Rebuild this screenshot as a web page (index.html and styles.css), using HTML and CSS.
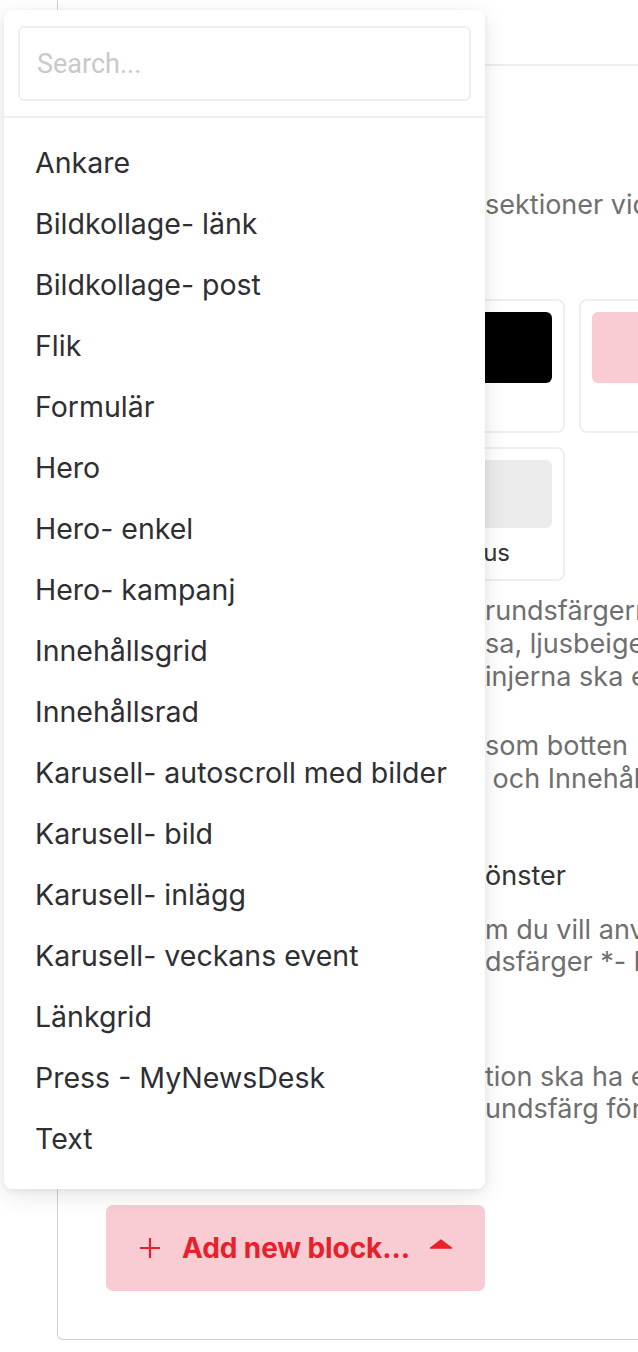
FILE: index.html
```html
<!DOCTYPE html>
<html lang="sv">
<head>
<meta charset="utf-8">
<title>Add new block</title>
<link rel="stylesheet" href="styles.css">
</head>
<body>
<div class="page">
  <section class="card">
    <div class="card-head"></div>
    <div class="card-body">
      <p class="desc intro">sektioner vid behov</p>
      <div class="swatches">
        <div class="swatch-card"><div class="swatch white"></div><span class="swatch-label"></span></div>
        <div class="swatch-card"><div class="swatch beige"></div><span class="swatch-label"></span></div>
        <div class="swatch-card"><div class="swatch black"></div><span class="swatch-label"></span></div>
        <div class="swatch-card"><div class="swatch pink"></div><span class="swatch-label"></span></div>
        <div class="swatch-card"><div class="swatch grey"></div><span class="swatch-label"></span></div>
        <div class="swatch-card"><div class="swatch grey"></div><span class="swatch-label"></span></div>
        <div class="swatch-card"><div class="swatch grey"></div><span class="swatch-label">Plus</span></div>
      </div>
      <div class="desc para-a">
        <p>rundsfärgerna</p>
        <p>sa, ljusbeige</p>
        <p>injerna ska endast</p>
      </div>
      <div class="desc para-b">
        <p>som botten</p>
        <p>&nbsp;och Innehållsrad</p>
      </div>
      <h3 class="sub">önster</h3>
      <div class="desc para-c">
        <p>m du vill använda</p>
        <p>dsfärger *- ljus</p>
      </div>
      <div class="desc para-d">
        <p>tion ska ha en</p>
        <p>undsfärg för</p>
      </div>
      <button class="add-btn" type="button">
        <svg class="plus" viewBox="0 0 22 22" width="22" height="22" aria-hidden="true"><path d="M11 1v20M1 11h20" stroke="currentColor" stroke-width="2.2" fill="none"/></svg>
        <span class="add-label">Add new block...</span>
        <svg class="caret" viewBox="0 0 24 10" width="24" height="10" aria-hidden="true"><path d="M12 1.2 L22.5 9 H1.5 Z" fill="currentColor" stroke="currentColor" stroke-width="1.5" stroke-linejoin="round"/></svg>
      </button>
    </div>
  </section>

  <div class="dropdown">
    <div class="search-wrap">
      <input class="search" type="text" placeholder="Search...">
    </div>
    <ul class="options">
      <li>Ankare</li>
      <li>Bildkollage- länk</li>
      <li>Bildkollage- post</li>
      <li>Flik</li>
      <li>Formulär</li>
      <li>Hero</li>
      <li>Hero- enkel</li>
      <li>Hero- kampanj</li>
      <li>Innehållsgrid</li>
      <li>Innehållsrad</li>
      <li>Karusell- autoscroll med bilder</li>
      <li>Karusell- bild</li>
      <li>Karusell- inlägg</li>
      <li>Karusell- veckans event</li>
      <li>Länkgrid</li>
      <li>Press - MyNewsDesk</li>
      <li>Text</li>
    </ul>
  </div>
</div>
</body>
</html>
```

FILE: styles.css
```css
* { box-sizing: border-box; }
html, body {
  margin: 0;
  padding: 0;
  background: #fff;
  overflow: hidden;
}
body {
  font-family: Inter, "Noto Sans", sans-serif;
  color: #333;
}
.page {
  position: relative;
  width: 638px;
  height: 1352px;
  padding-left: 57px;
  overflow: hidden;
}
.card {
  width: 720px;
  border: 1px solid #cfcfcf;
  border-top: none;
  border-radius: 0 0 6px 6px;
  background: #fff;
}
.card-head {
  height: 66px;
  border-bottom: 2px solid #eeeeee;
}
.card-body {
  padding: 0 0 48px 48px;
  display: grid;
  grid-template-columns: 379px 1fr;
}
.card-body > * { grid-column: 2; }
.card-body > .swatches,
.card-body > .add-btn { grid-column: 1 / -1; }

.desc {
  margin: 0;
  font-size: 27px;
  line-height: 33px;
  color: #6f6f6f;
  white-space: nowrap;
}
.desc p { margin: 0; }
.intro { margin-top: 122px; }

.swatches {
  margin-top: 78px;
  margin-left: -1px;
  display: grid;
  grid-template-columns: repeat(4, 144px);
  gap: 14px 14px;
}
.swatch-card {
  height: 134px;
  border: 2px solid #efefef;
  border-radius: 8px;
  padding: 11px;
  display: flex;
  flex-direction: column;
}
.swatch {
  height: 71px;
  border-radius: 6px;
}
.swatch.white { background: #fff; border: 1px solid #eee; }
.swatch.beige { background: #f3ece2; }
.swatch.black { background: #000; }
.swatch.pink { background: #f9cbd3; }
.swatch.grey { background: #ebebeb; }
.swatch-label {
  margin-top: 10px;
  padding-right: 14px;
  text-align: center;
  font-size: 24px;
  line-height: 30px;
  color: #333;
}

.para-a { margin-top: 13px; }
.para-b { margin-top: 36px; }
.sub {
  margin: 64px 0 0;
  font-size: 27px;
  line-height: 33px;
  font-weight: 400;
  color: #333;
  white-space: nowrap;
}
.para-c { margin-top: 22px; }
.para-c p { line-height: 32px; }
.para-d { margin-top: 83px; }
.para-d p { line-height: 32px; }

.add-btn {
  justify-self: start;
  margin-top: 80px;
  width: 379px;
  height: 86px;
  border: none;
  border-radius: 7px;
  background: #f9cbd3;
  color: #e8202a;
  display: flex;
  align-items: center;
  padding: 0 0 0 33px;
  font-family: Inter, "Noto Sans", sans-serif;
  font-weight: 700;
  font-size: 28px;
  cursor: pointer;
}
.plus { flex: none; }
.add-label { margin-left: 21px; letter-spacing: -0.1px; }
.caret { margin-left: 19px; margin-top: -8px; flex: none; }

.dropdown {
  position: absolute;
  left: 4px;
  top: 10px;
  width: 481px;
  background: #fff;
  border-radius: 8px;
  box-shadow: 0 2px 6px rgba(0,0,0,0.06), 0 6px 24px rgba(0,0,0,0.10);
}
.search-wrap {
  padding: 16px 14px 15px;
  border-bottom: 2px solid #eeeeee;
}
.search {
  display: block;
  width: 100%;
  height: 75px;
  border: 2px solid #efefef;
  border-radius: 6px;
  padding: 0 17px;
  font-family: Roboto, "Liberation Sans", sans-serif;
  font-size: 27px;
  color: #333;
  outline: none;
}
.search::placeholder { color: #c9c9c9; }
.options {
  list-style: none;
  margin: 0;
  padding: 14px 0 20px;
}
.options li {
  height: 61px;
  line-height: 61px;
  padding-left: 31px;
  font-size: 28.5px;
  color: #2f2f33;
  white-space: nowrap;
}
```
